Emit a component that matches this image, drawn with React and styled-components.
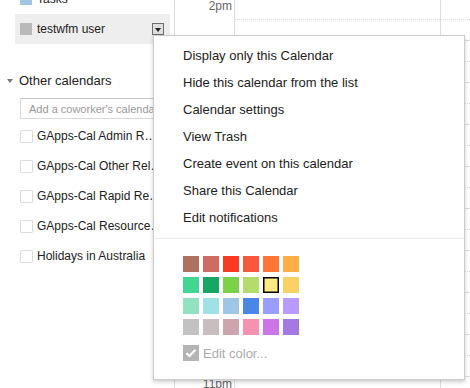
import React from "react"
import styled, { createGlobalStyle, css } from "styled-components"

const GlobalStyle = createGlobalStyle`
  html, body {
    margin: 0;
    padding: 0;
    background: #fff;
    overflow: hidden;
  }
  body {
    font-family: "Liberation Sans", Arial, sans-serif;
    color: #222;
  }
`

const Page = styled.div`
  position: relative;
  display: flex;
  height: 388px;
  overflow: hidden;
`

const Sidebar = styled.div`
  flex: none;
  width: 174px;
  margin-top: -16px;
  font-size: 12px;
`

const CalRow = styled.div`
  display: flex;
  align-items: center;
  gap: 5px;
  width: 155px;
  height: 30px;
  margin-left: 15px;
  padding: 0 6px 0 5px;
  box-sizing: border-box;
  background: ${props => (props.$selected ? "#eee" : "transparent")};
`

const Swatch = styled.span`
  flex: none;
  width: 12px;
  height: 12px;
  background: ${props => props.$color};
`

const CalName = styled.span`
  flex: 1;
  white-space: nowrap;
  overflow: hidden;
`

const DropButton = styled.span`
  flex: none;
  display: flex;
  align-items: center;
  justify-content: center;
  width: 12px;
  height: 12px;
  box-sizing: border-box;
  border: 1px solid #6e6e6e;
  background: #dedede;

  &::after {
    content: "";
    border-left: 3px solid transparent;
    border-right: 3px solid transparent;
    border-top: 4px solid #222;
    margin-top: 1px;
  }
`

const SectionHeader = styled.div`
  display: flex;
  align-items: center;
  gap: 6px;
  height: 28px;
  margin-top: 22px;
  padding-left: 7px;
  font-size: 13px;
  color: #222;

  &::before {
    content: "";
    border-left: 3.5px solid transparent;
    border-right: 3.5px solid transparent;
    border-top: 4px solid #777;
    margin-top: 1px;
  }
`

const AddInput = styled.input`
  display: block;
  width: 148px;
  height: 21px;
  margin: 4px 0 2px 20px;
  padding: 0 0 0 8px;
  box-sizing: border-box;
  border: 1px solid #d9d9d9;
  border-top-color: #c4c4c4;
  font-family: inherit;
  font-size: 11px;
  outline: none;

  &::placeholder {
    color: #999;
  }
`

const CheckRow = styled.div`
  display: flex;
  align-items: center;
  gap: 4px;
  height: 30px;
  margin-left: 20px;
`

const Box = styled.span`
  flex: none;
  width: 13px;
  height: 13px;
  box-sizing: border-box;
  border: 1px solid #dcdcdc;
  border-radius: 1px;
  background: #fff;
`

const CheckName = styled.span`
  width: 126px;
  white-space: nowrap;
  overflow: hidden;
  text-overflow: ellipsis;
`

const Grid = styled.div`
  flex: 1;
  display: flex;
  margin-top: -2px;
  border-left: 1px solid #ddd;
`

const TimeCol = styled.div`
  flex: none;
  width: 59px;
`

const TimeSlot = styled.div`
  height: 42px;
  box-sizing: border-box;
  padding: 1px 2px 0 0;
  text-align: right;
  font-size: 12px;
  line-height: 14px;
  color: #666;
`

const DayCol = styled.div`
  border-left: 1px solid #ddd;
  ${props =>
    props.$width
      ? css`
          flex: none;
          width: ${props.$width}px;
        `
      : css`
          flex: 1;
        `}
`

const HourCell = styled.div`
  height: 42px;
  box-sizing: border-box;
  border-top: 1px solid #ddd;
`

const HalfHour = styled.div`
  height: 21px;
  box-sizing: border-box;
  border-bottom: 1px dotted #ddd;
`

const Menu = styled.div`
  position: absolute;
  left: 153px;
  top: 35px;
  width: 312px;
  height: 345px;
  box-sizing: border-box;
  border: 1px solid #ccc;
  background: #fff;
  box-shadow: 0 2px 4px rgba(0, 0, 0, 0.2);
  padding-top: 6px;
  font-size: 13px;
`

const MenuItem = styled.div`
  height: 27px;
  line-height: 27px;
  padding-left: 29px;
  color: #222;
  white-space: nowrap;
`

const Separator = styled.div`
  height: 1px;
  margin-top: 7px;
  background: #ebebeb;
`

const Palette = styled.div`
  display: grid;
  grid-template-columns: repeat(6, 16px);
  column-gap: 4px;
  row-gap: 5px;
  margin: 17px 0 0 29px;
`

const Chip = styled.span`
  width: 16px;
  height: 16px;
  box-sizing: border-box;
  background: ${props => props.$color};
  ${props =>
    props.$selected &&
    css`
      border: 1px solid #000;
      box-shadow: inset 0 0 0 0.5px #000;
    `}
`

const EditColor = styled.div`
  display: flex;
  align-items: center;
  gap: 4px;
  margin: 10px 0 0 29px;
  color: #aaa;
  font-size: 13px;
`

const DisabledCheck = styled.span`
  display: flex;
  align-items: center;
  justify-content: center;
  width: 16px;
  height: 16px;
  background: #b4b4b4;
`

const myCalendars = [
  { name: "Tasks", color: "#9fc6e7" },
  { name: "testwfm user", color: "#b9b9b9", selected: true },
]

const otherCalendars = [
  "GApps-Cal Admin Requests",
  "GApps-Cal Other Releases",
  "GApps-Cal Rapid Release",
  "GApps-Cal Resource Calendar",
  "Holidays in Australia",
]

const hours = ["2pm", "3pm", "4pm", "5pm", "6pm", "7pm", "8pm", "9pm", "10pm", "11pm"]

const menuItems = [
  "Display only this Calendar",
  "Hide this calendar from the list",
  "Calendar settings",
  "View Trash",
  "Create event on this calendar",
  "Share this Calendar",
  "Edit notifications",
]

const colors = [
  "#ac725e", "#d06b64", "#f83a22", "#fa573c", "#ff7537", "#ffad46",
  "#42d692", "#16a765", "#7bd148", "#b3dc6c", "#fbe983", "#fad165",
  "#92e1c0", "#9fe1e7", "#9fc6e7", "#4986e7", "#9a9cff", "#b99aff",
  "#c2c2c2", "#cabdbf", "#cca6ac", "#f691b2", "#cd74e6", "#a47ae2",
]

const Hours = () =>
  hours.map(h => (
    <HourCell key={h}>
      <HalfHour />
    </HourCell>
  ))

export default function App() {
  return (
    <Page>
      <GlobalStyle />
      <Sidebar>
        {myCalendars.map(cal => (
          <CalRow key={cal.name} $selected={cal.selected}>
            <Swatch $color={cal.color} />
            <CalName>{cal.name}</CalName>
            {cal.selected && <DropButton />}
          </CalRow>
        ))}
        <SectionHeader>Other calendars</SectionHeader>
        <AddInput placeholder="Add a coworker's calendar" />
        {otherCalendars.map(name => (
          <CheckRow key={name}>
            <Box />
            <CheckName>{name}</CheckName>
          </CheckRow>
        ))}
      </Sidebar>

      <Grid>
        <TimeCol>
          {hours.map(h => (
            <TimeSlot key={h}>{h}</TimeSlot>
          ))}
        </TimeCol>
        <DayCol $width={205}>
          <Hours />
        </DayCol>
        <DayCol>
          <Hours />
        </DayCol>
      </Grid>

      <Menu>
        {menuItems.map(item => (
          <MenuItem key={item}>{item}</MenuItem>
        ))}
        <Separator />
        <Palette>
          {colors.map((c, i) => (
            <Chip key={c + i} $color={c} $selected={i === 10} />
          ))}
        </Palette>
        <EditColor>
          <DisabledCheck>
            <svg width="12" height="10" viewBox="0 0 12 10">
              <path d="M1.5 5.2 L4.5 8 L10.5 1.8" fill="none" stroke="#fff" strokeWidth="2.2" />
            </svg>
          </DisabledCheck>
          Edit color...
        </EditColor>
      </Menu>
    </Page>
  )
}
